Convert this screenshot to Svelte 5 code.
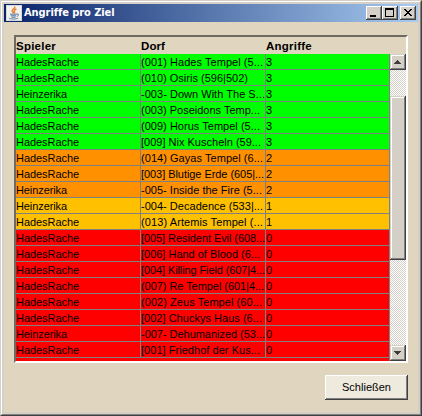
<script>
  // [player, village, attacks, player text width, village text width]
  const rows = [
    ['HadesRache', '(001) Hades Tempel (5...', 3, 63, 122],
    ['HadesRache', '(010) Osiris (596|502)', 3, 63, 107],
    ['Heinzerika', '-003- Down With The S...', 3, 51, 124],
    ['HadesRache', '(003) Poseidons Temp...', 3, 63, 119],
    ['HadesRache', '(009) Horus Tempel (5...', 3, 63, 119],
    ['HadesRache', '[009] Nix Kuscheln (59...', 3, 63, 120],
    ['HadesRache', '(014) Gayas Tempel (6...', 2, 63, 122],
    ['HadesRache', '[003] Blutige Erde (605|...', 2, 63, 123],
    ['Heinzerika', '-005- Inside the Fire (5...', 2, 51, 121],
    ['Heinzerika', '-004- Decadence (533|...', 1, 51, 122],
    ['HadesRache', '(013) Artemis Tempel (...', 1, 63, 122],
    ['HadesRache', '[005] Resident Evil (608...', 0, 63, 124],
    ['HadesRache', '[006] Hand of Blood (6...', 0, 63, 119],
    ['HadesRache', '[004] Killing Field (607|4...', 0, 63, 124],
    ['HadesRache', '(007) Re Tempel (601|4...', 0, 63, 123],
    ['HadesRache', '(002) Zeus Tempel (60...', 0, 63, 121],
    ['HadesRache', '[002] Chuckys Haus (6...', 0, 63, 121],
    ['Heinzerika', '-007- Dehumanized (53...', 0, 51, 124],
    ['HadesRache', '[001] Friedhof der Kus...', 0, 63, 119]
  ];

  // Spreads the letters so that the text takes the given width.
  function fit(node, width) {
    const natural = node.getBoundingClientRect().width;
    node.style.letterSpacing = `${(width - natural) / node.textContent.length}px`;
  }
</script>

<div class="window">
  <div class="frame">
    <header class="title">
      <svg class="java" width="16" height="16" viewBox="0 0 16 16">
        <rect width="16" height="16" fill="#d8d8d8" />
        <rect x="1" y="1" width="14" height="14" fill="#f4f2ee" />
        <path d="M8.8 1.5C9.6 3.6 5.5 4.4 6.1 6.2C6.4 7 7.2 7.5 7.5 8.3M10.4 4C8 5 7.5 5.9 8.5 7.2C8.8 7.7 8.5 8.2 8.2 8.5" fill="none" stroke="#e8822c" stroke-width="1.4" />
        <path d="M4 9.2H11M4.6 10.8H10.2M5.4 12.2H9.6M11 9C13.4 8.6 13 11 10.8 11.4M2.8 13.1C3.6 14.3 10.5 14.3 12.3 13.2" fill="none" stroke="#54789c" stroke-width="1" />
      </svg>
      <span class="caption"><span use:fit={90}>Angriffe pro Ziel</span></span>
      <div class="controls">
        <button class="raised" aria-label="Minimieren">
          <svg width="16" height="14" shape-rendering="crispEdges"><path d="M4 9h6v2H4z" /></svg>
        </button>
        <button class="raised" aria-label="Maximieren">
          <svg width="16" height="14" shape-rendering="crispEdges"><path fill-rule="evenodd" d="M3 2h9v9H3zM4 4v6h7V4z" /></svg>
        </button>
        <button class="raised close" aria-label="Beenden">
          <svg width="16" height="14" shape-rendering="crispEdges"><path d="M4 3h2v1h1v1h2V4h1V3h2v1h-1v1h-1v1H9v1h1v1h1v1h1v1h-2V9H9V8H7v1H6v1H4V9h1V8h1V7h1V6H6V5H5V4H4z" /></svg>
        </button>
      </div>
    </header>

    <main>
      <div class="pane">
        <div class="head">
          <b><span use:fit={40}>Spieler</span></b>
          <b><span use:fit={24}>Dorf</span></b>
          <b><span use:fit={46}>Angriffe</span></b>
        </div>
        <div class="body">
          <div class="rows">
            {#each rows as [player, village, attacks, pw, vw]}
              <div class="row a{attacks}">
                <div class="cell"><span use:fit={pw}>{player}</span></div>
                <div class="cell"><span use:fit={vw}>{village}</span></div>
                <div class="cell"><span>{attacks}</span></div>
              </div>
            {/each}
            <div class="row a0 cut"></div>
          </div>
          <div class="scrollbar">
            <div class="raised arrow">
              <svg width="16" height="16" shape-rendering="crispEdges"><path d="M7 6h1v1h1v1h1v1h1v1H4V9h1V8h1V7h1z" /></svg>
            </div>
            <div class="before"></div>
            <div class="raised thumb"></div>
            <div class="after"></div>
            <div class="raised arrow">
              <svg width="16" height="16" shape-rendering="crispEdges"><path d="M4 6h7v1h-1v1H9v1H8v1H7V9H6V8H5V7H4z" /></svg>
            </div>
          </div>
        </div>
      </div>
      <button class="raised ok"><span use:fit={49}>Schließen</span></button>
    </main>
  </div>
</div>

<style>
  .window, .window * { box-sizing: border-box; }
  .window {
    width: 422px;
    height: 416px;
    border: 1px solid;
    border-color: #d4d0c8 #404040 #404040 #d4d0c8;
    font: 11px/15px "Liberation Sans", Arial, sans-serif;
    color: #000;
  }
  .frame {
    height: 414px;
    border: 1px solid;
    border-color: #fff #808080 #808080 #fff;
    outline: 2px solid #d4d0c8;
    outline-offset: -3px;
    padding: 2px;
    background: #e0d5be;
  }
  span { white-space: pre; }
  button {
    margin: 0;
    padding: 0;
    font: inherit;
    color: inherit;
  }
  svg { display: block; }
  .title {
    display: flex;
    align-items: center;
    height: 18px;
    padding: 0 2px;
    background: linear-gradient(90deg, #0a246a, #a6caf0);
  }
  .caption {
    flex: 1;
    padding-left: 2px;
    color: #fff;
    font: bold 11px/16px "DejaVu Sans Condensed", "DejaVu Sans", sans-serif;
  }
  .controls { display: flex; }
  .raised {
    border: 0;
    background: #d4d0c8;
    box-shadow: inset -1px -1px #404040, inset 1px 1px #fff, inset -2px -2px #808080;
  }
  .controls button { width: 16px; height: 14px; }
  .controls .close { margin-left: 2px; }
  main {
    display: flex;
    flex-direction: column;
    padding: 13px 10px 0;
  }
  .pane {
    height: 328px;
    border: 2px solid;
    border-color: #6f6a62 #fff #fff #6f6a62;
  }
  .head {
    display: grid;
    grid-template-columns: 125px 125px 1fr;
    height: 17px;
    font-size: 11.5px;
    line-height: 18px;
  }
  .body { display: flex; height: 307px; }
  .rows { width: 374px; }
  .row {
    display: grid;
    grid-template-columns: 125px 125px 124px;
    height: 16px;
  }
  .cell {
    border: solid #808080;
    border-width: 0 1px 1px 0;
    line-height: 16px;
    overflow: hidden;
  }
  .a3 { background: #0f0; }
  .a2 { background: #ff9000; }
  .a1 { background: #ffc000; }
  .a0 { background: #f00; }
  .cut { height: 3px; border-right: 1px solid #808080; }
  .scrollbar {
    display: flex;
    flex-direction: column;
    width: 16px;
    background: repeating-conic-gradient(#fff 0 25%, #d4d0c8 0 50%) 0 0 / 2px 2px;
  }
  .scrollbar .raised {
    box-shadow: inset -1px -1px #404040, inset 1px 1px #d4d0c8, inset -2px -2px #808080, inset 2px 2px #fff;
  }
  .arrow { height: 16px; fill: #403c3c; }
  .before { height: 26px; }
  .thumb { height: 164px; }
  .after { flex: 1; }
  .ok {
    align-self: flex-end;
    width: 83px;
    height: 25px;
    margin-top: 12px;
    background: #eeeade;
    line-height: 25px;
  }
</style>
